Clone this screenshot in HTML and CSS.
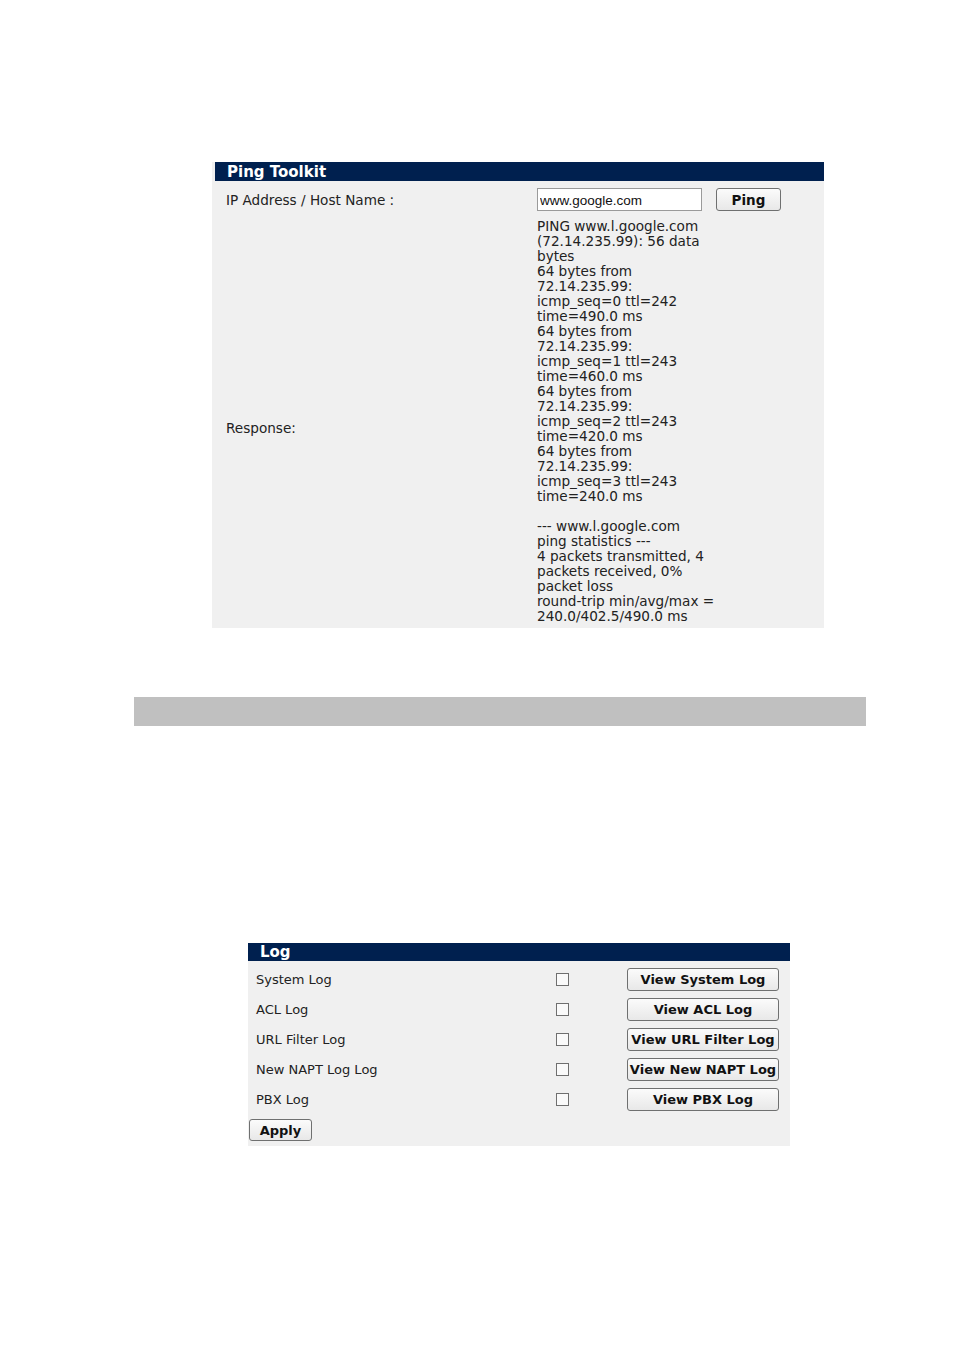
FILE: index.html
```html
<!DOCTYPE html>
<html>
<head>
<meta charset="utf-8">
<link rel="stylesheet" href="styles.css">
</head>
<body>
<div class="ping-panel">
  <div class="ping-head">Ping Toolkit</div>
  <div class="ping-row first">
    <div class="ping-label">IP Address / Host Name :</div>
    <div class="ping-field">
      <input class="host-input" type="text" value="www.google.com">
      <button class="btn ping-btn">Ping</button>
    </div>
  </div>
  <div class="ping-row resp">
    <div class="ping-label resp-label">Response:</div>
    <div class="resp-text">PING www.l.google.com<br>(72.14.235.99): 56 data<br>bytes<br>64 bytes from<br>72.14.235.99:<br>icmp_seq=0 ttl=242<br>time=490.0 ms<br>64 bytes from<br>72.14.235.99:<br>icmp_seq=1 ttl=243<br>time=460.0 ms<br>64 bytes from<br>72.14.235.99:<br>icmp_seq=2 ttl=243<br>time=420.0 ms<br>64 bytes from<br>72.14.235.99:<br>icmp_seq=3 ttl=243<br>time=240.0 ms<br>&nbsp;<br>--- www.l.google.com<br>ping statistics ---<br>4 packets transmitted, 4<br>packets received, 0%<br>packet loss<br>round-trip min/avg/max =<br>240.0/402.5/490.0 ms</div>
  </div>
</div>

<div class="gray-bar"></div>

<div class="log-panel">
  <div class="log-head">Log</div>
  <div class="log-body">
    <div class="log-row"><span class="log-label">System Log</span><span class="cb"></span><button class="btn log-btn">View System Log</button></div>
    <div class="log-row"><span class="log-label">ACL Log</span><span class="cb"></span><button class="btn log-btn">View ACL Log</button></div>
    <div class="log-row"><span class="log-label">URL Filter Log</span><span class="cb"></span><button class="btn log-btn">View URL Filter Log</button></div>
    <div class="log-row"><span class="log-label">New NAPT Log Log</span><span class="cb"></span><button class="btn log-btn">View New NAPT Log</button></div>
    <div class="log-row"><span class="log-label">PBX Log</span><span class="cb"></span><button class="btn log-btn">View PBX Log</button></div>
    <div class="apply-row"><button class="btn apply-btn">Apply</button></div>
  </div>
</div>
</body>
</html>
```
FILE: styles.css
```css
html, body {
  margin: 0;
  padding: 0;
  background: #ffffff;
}
body {
  font-family: "DejaVu Sans", Verdana, sans-serif;
  font-size: 13px;
  color: #222;
  width: 954px;
  height: 1351px;
  overflow: hidden;
}
.ping-panel {
  margin: 162px 0 0 212px;
  width: 612px;
  background: #f0f0f0;
  font-size: 13.6px;
}
.ping-head {
  margin-left: 3px;
  height: 19px;
  box-sizing: border-box;
  padding-top: 1px;
  background: #00204f;
  color: #fff;
  font-weight: bold;
  font-size: 15px;
  line-height: 18px;
  padding-left: 12px;
}
.ping-row {
  display: flex;
}
.ping-row.first {
  height: 38px;
  padding-top: 7px;
  box-sizing: border-box;
}
.ping-label {
  width: 325px;
  box-sizing: border-box;
  padding-left: 14px;
  line-height: 25px;
}
.ping-field {
  display: flex;
  align-items: flex-start;
}
.host-input {
  width: 165px;
  height: 23px;
  box-sizing: border-box;
  border: 1px solid #9a9a9a;
  background: #fff;
  font-family: "Liberation Sans", Arial, sans-serif;
  font-size: 13.5px;
  padding: 1px 2px 0;
  margin: 0;
  color: #111;
}
.btn {
  font-family: "DejaVu Sans", Verdana, sans-serif;
  font-weight: bold;
  font-size: 13px;
  color: #111;
  background: linear-gradient(#fbfbfb, #e8e8e8);
  border: 1px solid #6f7070;
  border-radius: 3px;
  padding: 0;
  margin: 0;
  box-sizing: border-box;
}
.ping-btn {
  width: 65px;
  height: 23px;
  margin-left: 14px;
  font-size: 13.5px;
}
.ping-row.resp {
  align-items: center;
  padding-bottom: 4px;
}
.resp-label {
  padding-top: 14px;
}
.resp-text {
  line-height: 15px;
  white-space: nowrap;
}
.gray-bar {
  margin: 69px 0 0 134px;
  width: 732px;
  height: 29px;
  background: #c0c0c0;
}
.log-panel {
  margin: 217px 0 0 248px;
  width: 542px;
  background: #f0f0f0;
}
.log-head {
  height: 18px;
  box-sizing: border-box;
  padding-top: 1px;
  background: #00204f;
  color: #fff;
  font-weight: bold;
  font-size: 15px;
  line-height: 17px;
  padding-left: 12px;
}
.log-body {
  padding-top: 3px;
}
.log-row {
  display: flex;
  align-items: center;
  height: 30px;
}
.log-label {
  width: 300px;
  padding-left: 8px;
}
.cb {
  width: 11px;
  height: 11px;
  border: 1px solid #6f6f6f;
  background: #fafafa;
  display: inline-block;
}
.log-btn {
  margin-left: 58px;
  width: 152px;
  height: 23px;
  white-space: nowrap;
}
.apply-row {
  height: 32px;
  display: flex;
  align-items: center;
  padding-left: 1px;
}
.apply-btn {
  width: 63px;
  height: 22px;
}
```
